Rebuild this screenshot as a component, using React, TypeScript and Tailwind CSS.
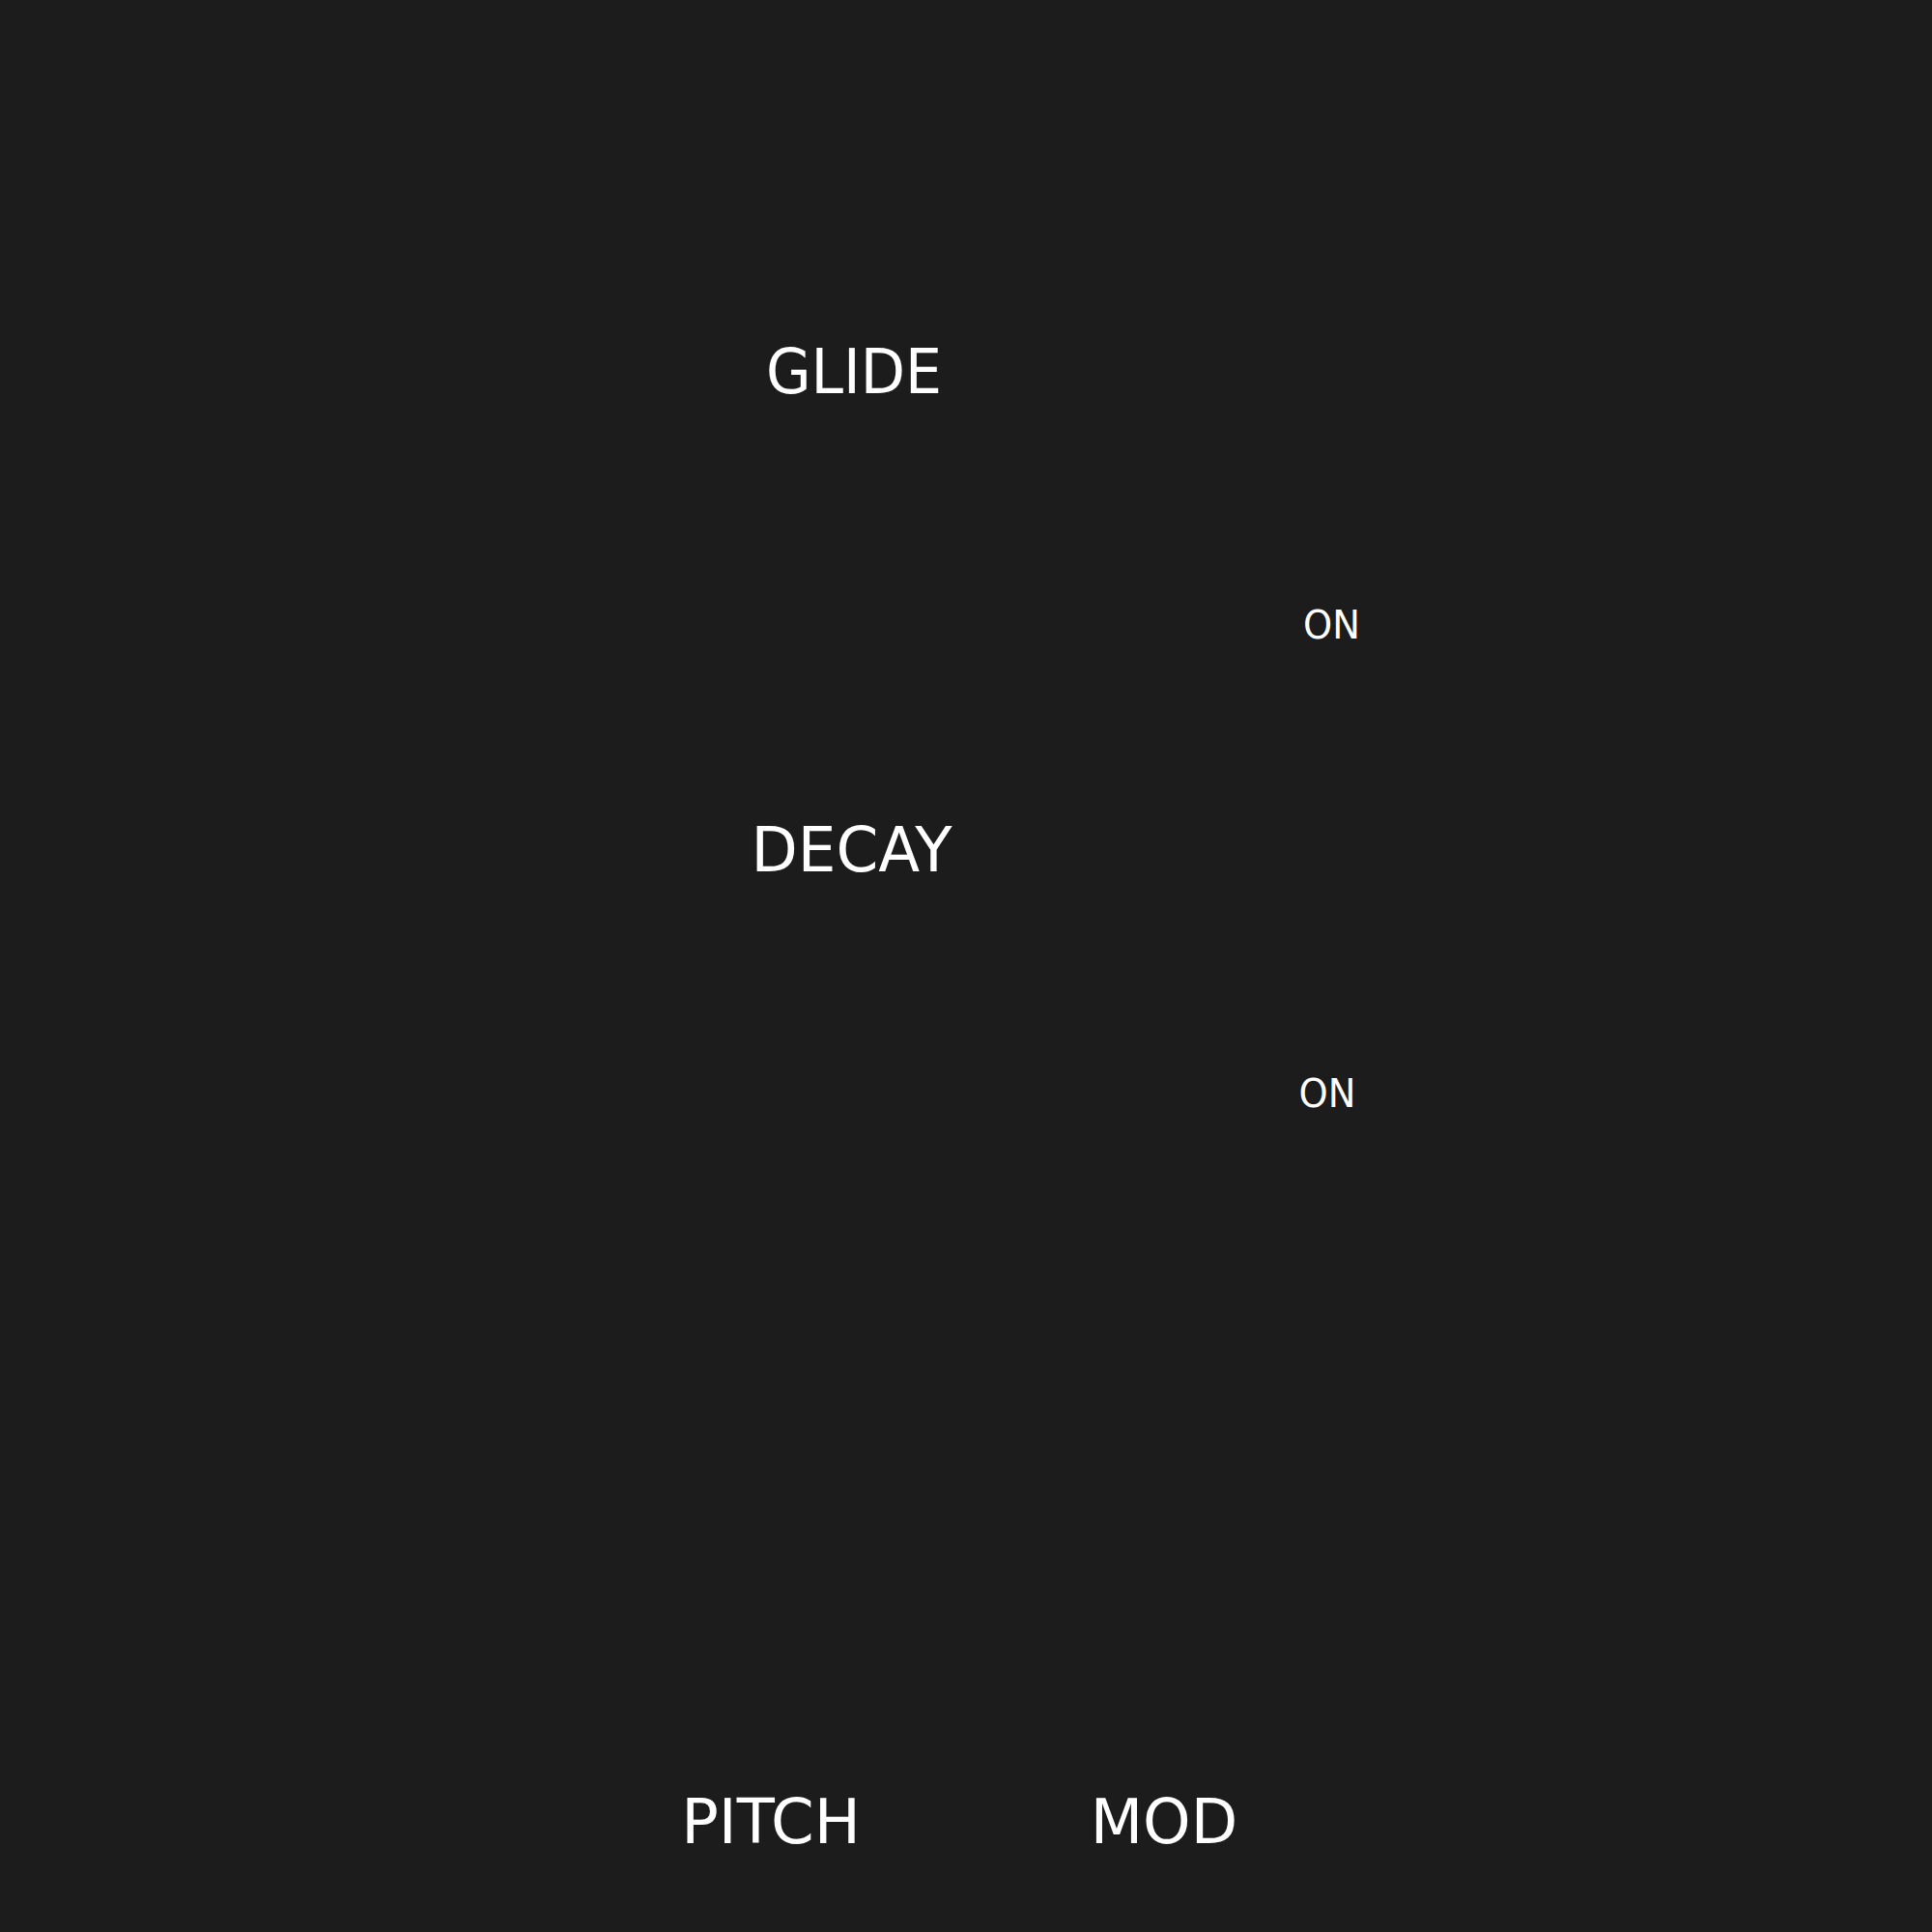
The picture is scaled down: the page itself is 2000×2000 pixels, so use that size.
import React from 'react';

// Mono synth panel: labels only, controls are not drawn
const font = "font-['DejaVu_Sans',sans-serif]";

const Label: React.FC<{ text: string; small?: boolean; className?: string }> = ({ text, small, className = '' }) => (
  <div
    className={`w-[300px] text-center text-white leading-none ${small ? 'text-[40px]' : 'text-[64px]'} ${className}`}
  >
    {text}
  </div>
);

export default function App() {
  return (
    <div className={`w-[2000px] h-[2000px] bg-[#1c1c1c] flex flex-col pt-[353px] ${font}`}>
      {/* Glide row */}
      <div className="flex pl-[734px] gap-[192px] h-[495px]">
        <Label text="GLIDE" className="scale-x-[0.94]" />
        <Label text="ON" small className="mt-[274px] pl-[5px] scale-x-[0.96]" />
      </div>

      {/* Decay row */}
      <div className="flex pl-[734px] gap-[192px] h-[1006px]">
        <Label text="DECAY" className="pr-[5px] scale-x-[0.98]" />
        <Label text="ON" small className="mt-[264px] pr-[4px] scale-x-[0.96]" />
      </div>

      {/* Wheels */}
      <div className="flex pl-[648px] gap-[107px]">
        <Label text="PITCH" />
        <Label text="MOD" className="scale-x-[0.985]" />
      </div>
    </div>
  );
}
